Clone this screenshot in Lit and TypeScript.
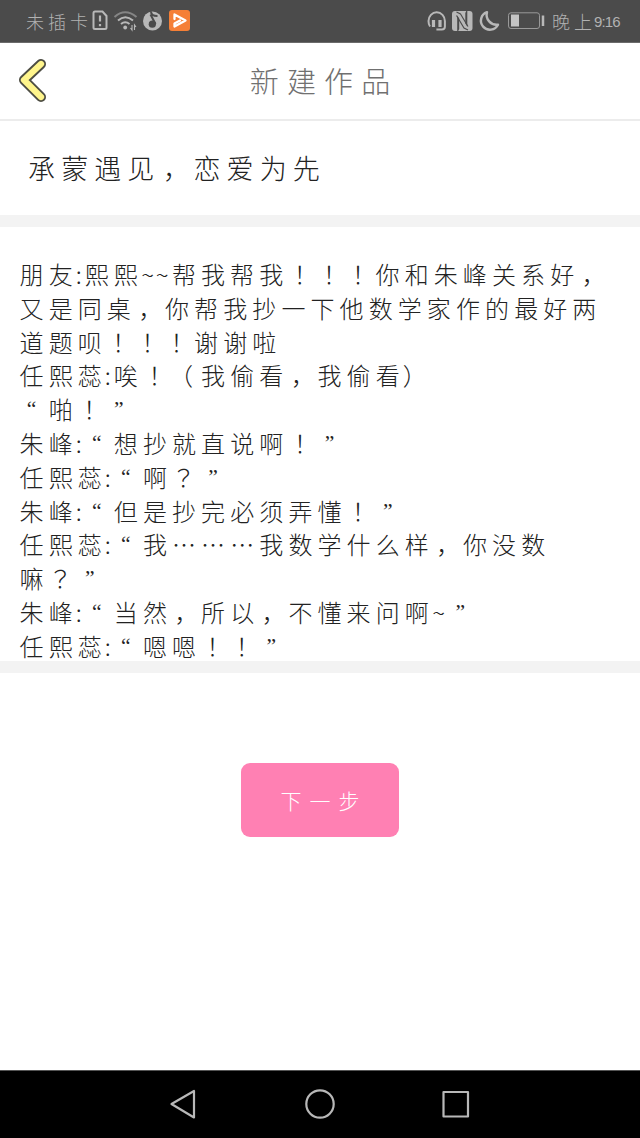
import { LitElement, html, css } from 'lit';
import { customElement, property } from 'lit/decorators.js';

const STORY = [
  '朋友:熙熙~~帮我帮我！！！你和朱峰关系好，',
  '又是同桌，你帮我抄一下他数学家作的最好两',
  '道题呗！！！谢谢啦',
  '任熙蕊:唉！（我偷看，我偷看）',
  '“啪！”',
  '朱峰:“想抄就直说啊！”',
  '任熙蕊:“啊？”',
  '朱峰:“但是抄完必须弄懂！”',
  '任熙蕊:“我………我数学什么样，你没数',
  '嘛？”',
  '朱峰:“当然，所以，不懂来问啊~”',
  '任熙蕊:“嗯嗯！！”',
];

const MARKS: Record<string, string> = {
  ':': 'colon',
  '~': 'tilde',
  '，': 'comma',
  '！': 'mid',
  '？': 'mid',
  '“': 'quote',
  '”': 'quote',
  '（': 'open',
  '）': 'close',
};

// One line of spaced writing, each punctuation mark gets its own cell
@customElement('spaced-text')
export class SpacedText extends LitElement {
  @property() text = '';

  static get styles() {
    return [
      css`
        :host {
          --pitch: 29.1px;

          display: flex;
          white-space: nowrap;
        }

        .glyph {
          flex: none;
          width: var(--pitch);
          text-align: center;
        }

        .colon {
          width: 7px;
        }

        .tilde {
          width: 14.5px;
        }

        .mid {
          font-family: 'Noto Sans CJK TC', sans-serif;
          text-indent: -1px;
        }

        .comma {
          text-indent: 5px;
        }

        .quote {
          font-family: 'Liberation Serif', serif;
          font-size: 0.9em;
        }

        .open {
          text-indent: -6px;
        }

        .close {
          text-indent: -4px;
        }
      `,
    ];
  }

  render() {
    return html`${[...this.text].map(c => html`<span class="glyph ${MARKS[c] || ''}">${c}</span>`)}`;
  }
}

@customElement('status-bar')
export class StatusBar extends LitElement {
  static get styles() {
    return [
      css`
        :host {
          display: flex;
          align-items: center;
          justify-content: space-between;
          box-sizing: border-box;
          height: 43px;
          padding: 0 20px 0 24px;
          color: #b2b2b2;
          background: #4b4b4b;
          border-bottom: 1px solid #6b6b6b;
          font-size: 18px;
          font-weight: 300;
        }

        .side {
          display: flex;
          align-items: center;
        }

        spaced-text {
          --pitch: 22px;
        }

        svg {
          display: block;
        }

        .time {
          width: 26px;
          font-family: 'Liberation Sans', sans-serif;
          font-size: 15px;
          letter-spacing: -0.9px;
        }
      `,
    ];
  }

  render() {
    return html`
      <div class="side">
        <spaced-text text="未插卡"></spaced-text>
        <svg width="102" height="24" viewBox="90 10 102 24" fill="none" stroke="#b8b8b8">
          <path d="M95 12.500h7.500l4 4.500v11.500a1.500 1.500 0 0 1-1.500 1.500H95a1.500 1.500 0 0 1-1.500-1.500V14a1.500 1.500 0 0 1 1.500-1.500z" stroke-width="2"/>
          <path d="M100 16.500v6M100 25v2.200" stroke-width="2.200"/>
          <path d="M114.500 18q10.500-9.500 22 0" stroke="#858585" stroke-width="2"/>
          <path d="M118 21.500q7.300-6.500 15 0M121 25q4.200-3.500 8.500 0" stroke-width="2"/>
          <circle cx="125.200" cy="28.500" r="1.900" fill="#b8b8b8" stroke="none"/>
          <path d="M132 26v5l-1.500-2M134.500 31v-5l1.500 2" stroke-width="1.100"/>
          <circle cx="152.500" cy="22" r="9.500" fill="#b8b8b8" stroke="none"/>
          <path d="M151 12.500q0 4.500 6.500 4.500M150.500 15.500l5 9.500" stroke="#4b4b4b" stroke-width="2"/>
          <circle cx="152.300" cy="25.200" r="3.600" fill="#4b4b4b" stroke="none"/>
          <rect x="169" y="11" width="21" height="21" rx="3" fill="#f57f36" stroke="none"/>
          <path d="M174.500 20v-4.500l11 6-11 6v-3l5.500-3" stroke="#fff" stroke-width="2.300" stroke-linejoin="round" stroke-linecap="round"/>
        </svg>
      </div>
      <div class="side">
        <svg width="124" height="24" viewBox="426 10 124 24" fill="none" stroke="#b8b8b8">
          <path d="M430 27.500q-1.500-2-1.500-5.500a8.200 8.700 0 0 1 16.400 0v5.500q0 3-3 3h-5.500" stroke-width="2"/>
          <path d="M433.500 21v7M440 21v7" stroke-width="3.200"/>
          <rect x="452" y="12" width="20.500" height="20" rx="3" fill="#b8b8b8" stroke="none"/>
          <path d="M457.200 32V16.500l2 3V30l-1 2z M467.300 12V27.500l-2-3V14l1-2z" fill="#4b4b4b" stroke="none"/>
          <path d="M456.500 13l4 2 7.500 12.500M456.500 16.500L464 29l4 2" stroke="#4b4b4b" stroke-width="1.100"/>
          <path d="M487 13.200a9 9 0 1 0 11 12.500a10 10 0 0 1-11-12.500z" stroke-width="2.400" stroke-linejoin="round"/>
          <rect x="508.500" y="13.800" width="31" height="15.700" rx="2.500" stroke="#999"/>
          <rect x="511" y="15.500" width="8" height="12" fill="#c4c4c4" stroke="none"/>
          <path d="M543 16.500v10.500" stroke-width="2.500"/>
        </svg>
        <spaced-text text="晚上"></spaced-text>
        <span class="time">9:16</span>
      </div>
    `;
  }
}

@customElement('app-root')
export class AppRoot extends LitElement {
  static get styles() {
    return [
      css`
        :host {
          display: flex;
          flex-direction: column;
          height: 1138px;
          overflow: hidden;
          color: #222;
          background: #fff;
          font-family: 'Noto Sans CJK SC', sans-serif;
          font-weight: 300;
        }

        header {
          display: grid;
          grid-template-columns: 64px 1fr 64px;
          align-items: center;
          box-sizing: border-box;
          height: 78px;
          border-bottom: 2px solid #ececec;
        }

        .back {
          display: block;
          margin-left: 16px;
        }

        h1 {
          justify-self: center;
          margin: 0;
          color: #707070;
          font-size: 29px;
          font-weight: 300;
          line-height: 42px;
          padding-bottom: 2px;
        }

        h1 spaced-text {
          --pitch: 37.2px;
        }

        .name {
          height: 94px;
          padding-left: 25px;
          font-size: 27px;
          line-height: 93px;
        }

        .name spaced-text {
          --pitch: 33.1px;
        }

        .divider {
          height: 12px;
          background: #f3f3f3;
        }

        .story {
          display: grid;
          align-content: start;
          row-gap: 3.8px;
          box-sizing: border-box;
          height: 434px;
          padding: 32px 0 0 17px;
          font-size: 24px;
          line-height: 30px;
        }

        .story spaced-text {
          height: 30px;
        }

        .actions {
          display: flex;
          flex: 1;
          align-items: flex-start;
          justify-content: center;
          padding-top: 90px;
        }

        button {
          width: 158px;
          height: 74px;
          padding: 0;
          border: none;
          border-radius: 9px;
          color: #fff;
          background: #ff80b3;
          font: inherit;
          font-size: 21px;
        }

        button spaced-text {
          justify-content: center;
        }

        nav {
          display: flex;
          justify-content: center;
          box-sizing: border-box;
          height: 68px;
          background: #000;
          border-top: 1px solid #555;
        }
      `,
    ];
  }

  render() {
    return html`
      <status-bar></status-bar>
      <header>
        <svg class="back" width="34" height="48" viewBox="16 58 34 48" fill="none" stroke-linecap="round" stroke-linejoin="round">
          <path d="M41 65L24 81L41 98" stroke="#4d4d43" stroke-width="10"/>
          <path d="M41 65L24 81L41 98" stroke="#fff58c" stroke-width="6.300"/>
        </svg>
        <h1><spaced-text text="新建作品"></spaced-text></h1>
      </header>
      <div class="name"><spaced-text text="承蒙遇见，恋爱为先"></spaced-text></div>
      <div class="divider"></div>
      <div class="story">
        ${STORY.map(line => html`<spaced-text text=${line}></spaced-text>`)}
      </div>
      <div class="divider"></div>
      <div class="actions">
        <button><spaced-text text="下一步"></spaced-text></button>
      </div>
      <nav>
        <svg width="320" height="67" viewBox="160 1071 320 67" fill="none" stroke="#b8b8b8" stroke-width="2.200" stroke-linejoin="round">
          <path d="M171.500 1104L194 1091V1117.500Z"/>
          <circle cx="320" cy="1104" r="13.700"/>
          <rect x="443.500" y="1092" width="24.500" height="24.500"/>
        </svg>
      </nav>
    `;
  }
}
